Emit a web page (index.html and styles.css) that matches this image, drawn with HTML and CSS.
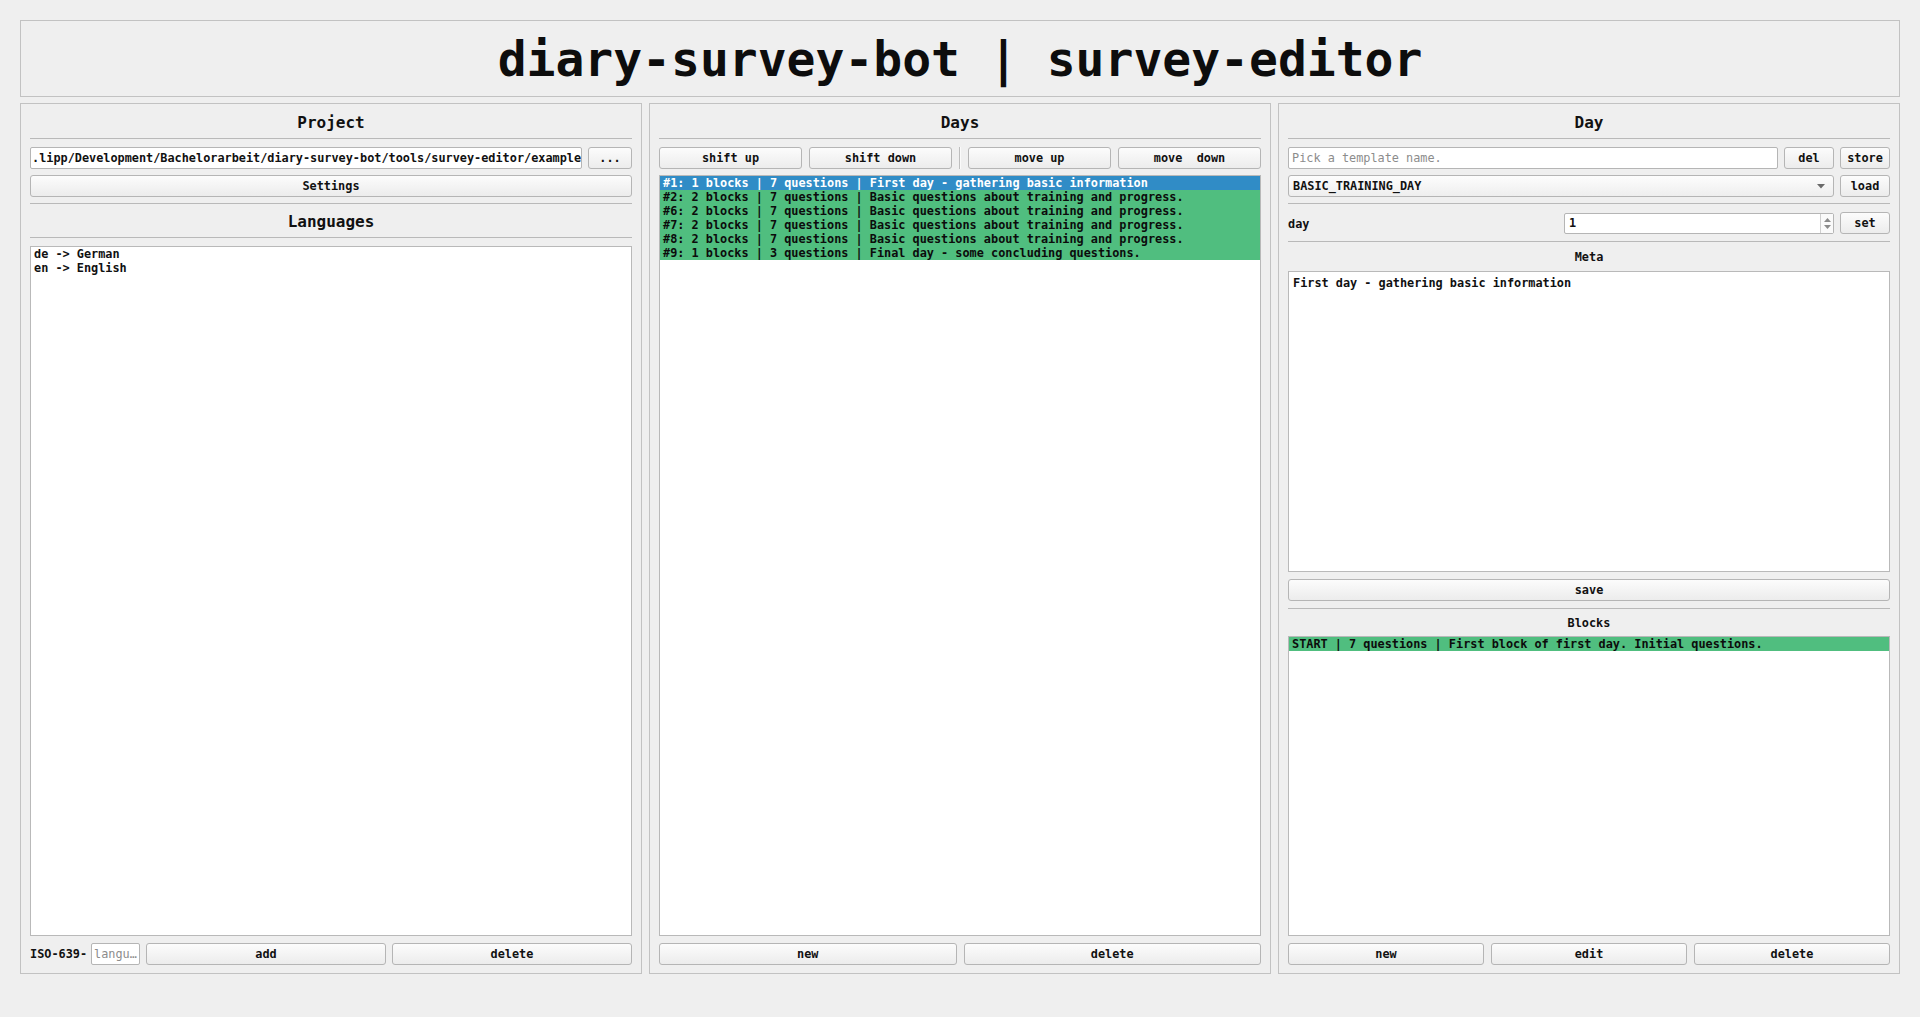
FILE: index.html
```html
<!DOCTYPE html>
<html lang="en">
<head>
<meta charset="utf-8">
<title>diary-survey-bot | survey-editor</title>
<link rel="stylesheet" href="styles.css">
</head>
<body>
<div class="app">
  <header class="title-box"><h1>diary-survey-bot | survey-editor</h1></header>
  <main class="panels">
    <section class="panel">
      <h2 class="heading">Project</h2>
      <div class="sep"></div>
      <div class="row">
        <div class="field path">.lipp/Development/Bachelorarbeit/diary-survey-bot/tools/survey-editor/example</div>
        <button class="btn w-dots">...</button>
      </div>
      <button class="btn wide mt6">Settings</button>
      <div class="sep mt6"></div>
      <h2 class="heading">Languages</h2>
      <div class="sep"></div>
      <div class="list">
        <div class="item">de -&gt; German</div>
        <div class="item">en -&gt; English</div>
      </div>
      <div class="row bottom lang-row">
        <span class="iso">ISO-639-</span>
        <div class="field lang placeholder">langu…</div>
        <button class="btn grow">add</button>
        <button class="btn grow">delete</button>
      </div>
    </section>

    <section class="panel">
      <h2 class="heading">Days</h2>
      <div class="sep"></div>
      <div class="row moves">
        <button class="btn grow">shift up</button>
        <button class="btn grow">shift down</button>
        <span class="vsep"></span>
        <button class="btn grow">move up</button>
        <button class="btn grow">move&nbsp;&nbsp;down</button>
      </div>
      <div class="list mt6">
        <div class="item selected">#1: 1 blocks | 7 questions | First day - gathering basic information</div>
        <div class="item ok">#2: 2 blocks | 7 questions | Basic questions about training and progress.</div>
        <div class="item ok">#6: 2 blocks | 7 questions | Basic questions about training and progress.</div>
        <div class="item ok">#7: 2 blocks | 7 questions | Basic questions about training and progress.</div>
        <div class="item ok">#8: 2 blocks | 7 questions | Basic questions about training and progress.</div>
        <div class="item ok">#9: 1 blocks | 3 questions | Final day - some concluding questions.</div>
      </div>
      <div class="row bottom">
        <button class="btn grow">new</button>
        <button class="btn grow">delete</button>
      </div>
    </section>

    <section class="panel">
      <h2 class="heading">Day</h2>
      <div class="sep"></div>
      <div class="row">
        <div class="field grow placeholder">Pick a template name.</div>
        <button class="btn w50">del</button>
        <button class="btn w50">store</button>
      </div>
      <div class="row mt6">
        <div class="combo grow">
          <span>BASIC_TRAINING_DAY</span>
          <svg class="combo-arrow" width="8" height="5" viewBox="0 0 8 5"><path d="M0 0H8L4 4.5Z" fill="#6a6a6a"/></svg>
        </div>
        <button class="btn w50">load</button>
      </div>
      <div class="sep mt6"></div>
      <div class="row">
        <span class="day-label grow">day</span>
        <div class="spin">
          <span class="spin-value">1</span>
          <span class="spin-arrows">
            <svg width="7" height="4" viewBox="0 0 7 4"><path d="M0 4H7L3.5 0Z" fill="#8a8a8a"/></svg>
            <svg width="7" height="4" viewBox="0 0 7 4"><path d="M0 0H7L3.5 4Z" fill="#8a8a8a"/></svg>
          </span>
        </div>
        <button class="btn w50">set</button>
      </div>
      <div class="sep mt7"></div>
      <div class="sublabel">Meta</div>
      <div class="textbox"><div class="textbox-text">First day - gathering basic information</div></div>
      <button class="btn wide mt7">save</button>
      <div class="sep mt7 mb7"></div>
      <div class="sublabel mb6">Blocks</div>
      <div class="list blocks">
        <div class="item ok">START | 7 questions | First block of first day. Initial questions.</div>
      </div>
      <div class="row bottom">
        <button class="btn grow">new</button>
        <button class="btn grow">edit</button>
        <button class="btn grow">delete</button>
      </div>
    </section>
  </main>
</div>
</body>
</html>
```

FILE: styles.css
```css
html, body {
  margin: 0;
  height: 100%;
}

body {
  background: #efefef;
  font-family: "DejaVu Sans Mono", "Liberation Mono", monospace;
  font-size: 11.85px;
  font-weight: bold;
  color: #111111;
}

.app {
  padding: 20px 20px 0;
  display: flex;
  flex-direction: column;
  gap: 6px;
}

.title-box {
  height: 77px;
  box-sizing: border-box;
  border: 1px solid #c2c2c2;
  display: flex;
  align-items: center;
  justify-content: center;
}

.title-box h1 {
  margin: 0;
  font-size: 48px;
  font-weight: bold;
  line-height: 1;
  color: #0d0d0d;
}

.panels {
  display: flex;
  gap: 7px;
  height: 871px;
}

.panel {
  flex: 1 1 0;
  min-width: 0;
  border: 1px solid #c2c2c2;
  padding: 9px 9px 8px;
  display: flex;
  flex-direction: column;
}

.heading {
  margin: 0;
  height: 20px;
  line-height: 20px;
  font-size: 16px;
  font-weight: bold;
  text-align: center;
}

.sep {
  height: 0;
  border-top: 1px solid #b9b9b9;
  margin-top: 5px;
  margin-bottom: 8px;
  flex: none;
}

.sep.mb7 { margin-bottom: 7px; }
.mt6 { margin-top: 6px; }
.mt7 { margin-top: 7px; }
.mb6 { margin-bottom: 6px; }

.row {
  display: flex;
  align-items: center;
  gap: 6px;
  height: 22px;
  flex: none;
}

.row.bottom {
  margin-top: 7px;
  gap: 7px;
}

.row.bottom.lang-row {
  gap: 6px;
}

.row.moves {
  gap: 7px;
}

.grow {
  flex: 1 1 0;
  min-width: 0;
}

.btn {
  height: 22px;
  box-sizing: border-box;
  border: 1px solid #b5b5b5;
  border-radius: 3px;
  background: linear-gradient(#fcfcfc, #ececec);
  font: inherit;
  color: #111111;
  padding: 0;
  text-align: center;
  line-height: 20px;
  white-space: nowrap;
  flex: none;
}

.btn.grow { flex: 1 1 0; }
.btn.wide { width: 100%; }
.btn.w-dots { width: 44px; }
.btn.w50 { width: 50px; }

.field {
  height: 22px;
  box-sizing: border-box;
  border: 1px solid #b5b5b5;
  border-radius: 2px;
  background: #ffffff;
  line-height: 20px;
  white-space: nowrap;
  overflow: hidden;
  padding: 0 3px;
}

.field.path {
  flex: 1 1 0;
  min-width: 0;
  padding: 0 1px;
}

.placeholder {
  color: #8c8c8c;
  font-weight: normal;
}

.iso {
  width: 55px;
  white-space: nowrap;
  flex: none;
}

.field.lang {
  width: 49px;
  flex: none;
  padding: 0 2px;
}

.vsep {
  width: 0;
  height: 22px;
  border-left: 1px solid #bdbdbd;
  border-right: 1px solid #fafafa;
  flex: none;
}

.list {
  flex: 1 1 0;
  min-height: 0;
  background: #ffffff;
  border: 1px solid #b9b9b9;
  overflow: hidden;
}

.item {
  height: 14px;
  line-height: 14px;
  padding-left: 3px;
  white-space: nowrap;
  overflow: hidden;
}

.item.ok {
  background: #50be7f;
  color: #0c0c0c;
}

.item.selected {
  background: #308cc6;
  color: #ffffff;
}

.combo {
  height: 22px;
  box-sizing: border-box;
  border: 1px solid #b5b5b5;
  border-radius: 3px;
  background: linear-gradient(#fdfdfd, #eeeeee);
  display: flex;
  align-items: center;
  justify-content: space-between;
  padding: 0 8px 0 4px;
  white-space: nowrap;
}

.combo-arrow {
  flex: none;
}

.day-label {
  padding-top: 2px;
}

.spin {
  width: 270px;
  height: 21px;
  box-sizing: border-box;
  border: 1px solid #b5b5b5;
  border-radius: 2px;
  background: #ffffff;
  display: flex;
  align-items: stretch;
  flex: none;
}

.spin-value {
  flex: 1;
  line-height: 19px;
  padding-left: 4px;
}

.spin-arrows {
  width: 12px;
  border-left: 1px solid #cfcfcf;
  display: flex;
  flex-direction: column;
  align-items: center;
  justify-content: center;
  gap: 3px;
  background: #fafafa;
}

.sublabel {
  height: 14px;
  line-height: 14px;
  text-align: center;
  margin-bottom: 7px;
  flex: none;
}

.sublabel.mb6 { margin-bottom: 6px; }

.textbox {
  flex: 1 1 0;
  min-height: 0;
  background: #ffffff;
  border: 1px solid #b9b9b9;
  overflow: hidden;
}

.textbox-text {
  padding: 4px;
  line-height: 14px;
}
```
